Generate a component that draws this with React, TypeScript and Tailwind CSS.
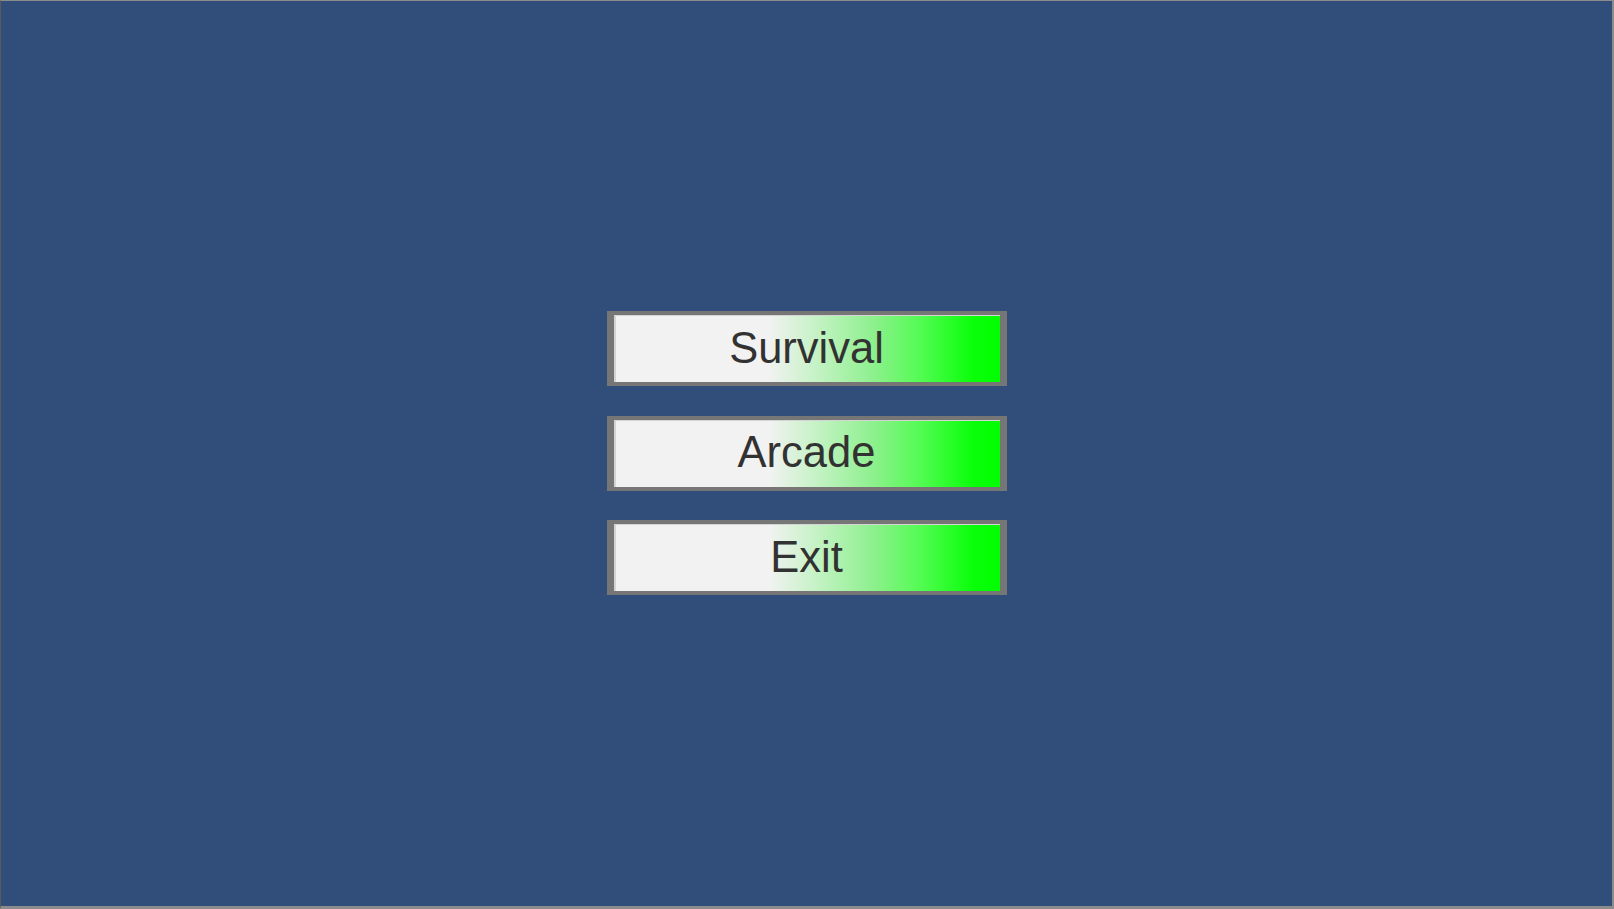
import React from "react";

const items = ["Survival", "Arcade", "Exit"];

export default function App() {
  return (
    <div className="flex h-[909px] w-full flex-col items-center justify-center gap-[29.5px] border-t border-l border-r-2 border-b-[3px] border-t-[#8c8c8c] border-l-[#5a5a5a] border-r-[#8c8c8c] border-b-[#8c8c8c] bg-[#314d79] pb-[1px]">
      {items.map((label) => (
        <button
          key={label}
          className="flex h-[75px] w-[400px] items-center justify-center border-x-[7px] border-y-[4px] border-[#767676] bg-[linear-gradient(to_right,#f2f2f2_0%,#f2f2f2_40%,#c3f2c3_53%,#8ef08e_67%,#55fb55_79%,#0aff0a_93%,#00ff00_100%)] shadow-[inset_2px_1px_0_#d4d4d4] text-[43.5px] leading-none text-[#323232] [font-family:'Liberation_Sans',Arial,sans-serif]"
        >
          {label}
        </button>
      ))}
    </div>
  );
}
